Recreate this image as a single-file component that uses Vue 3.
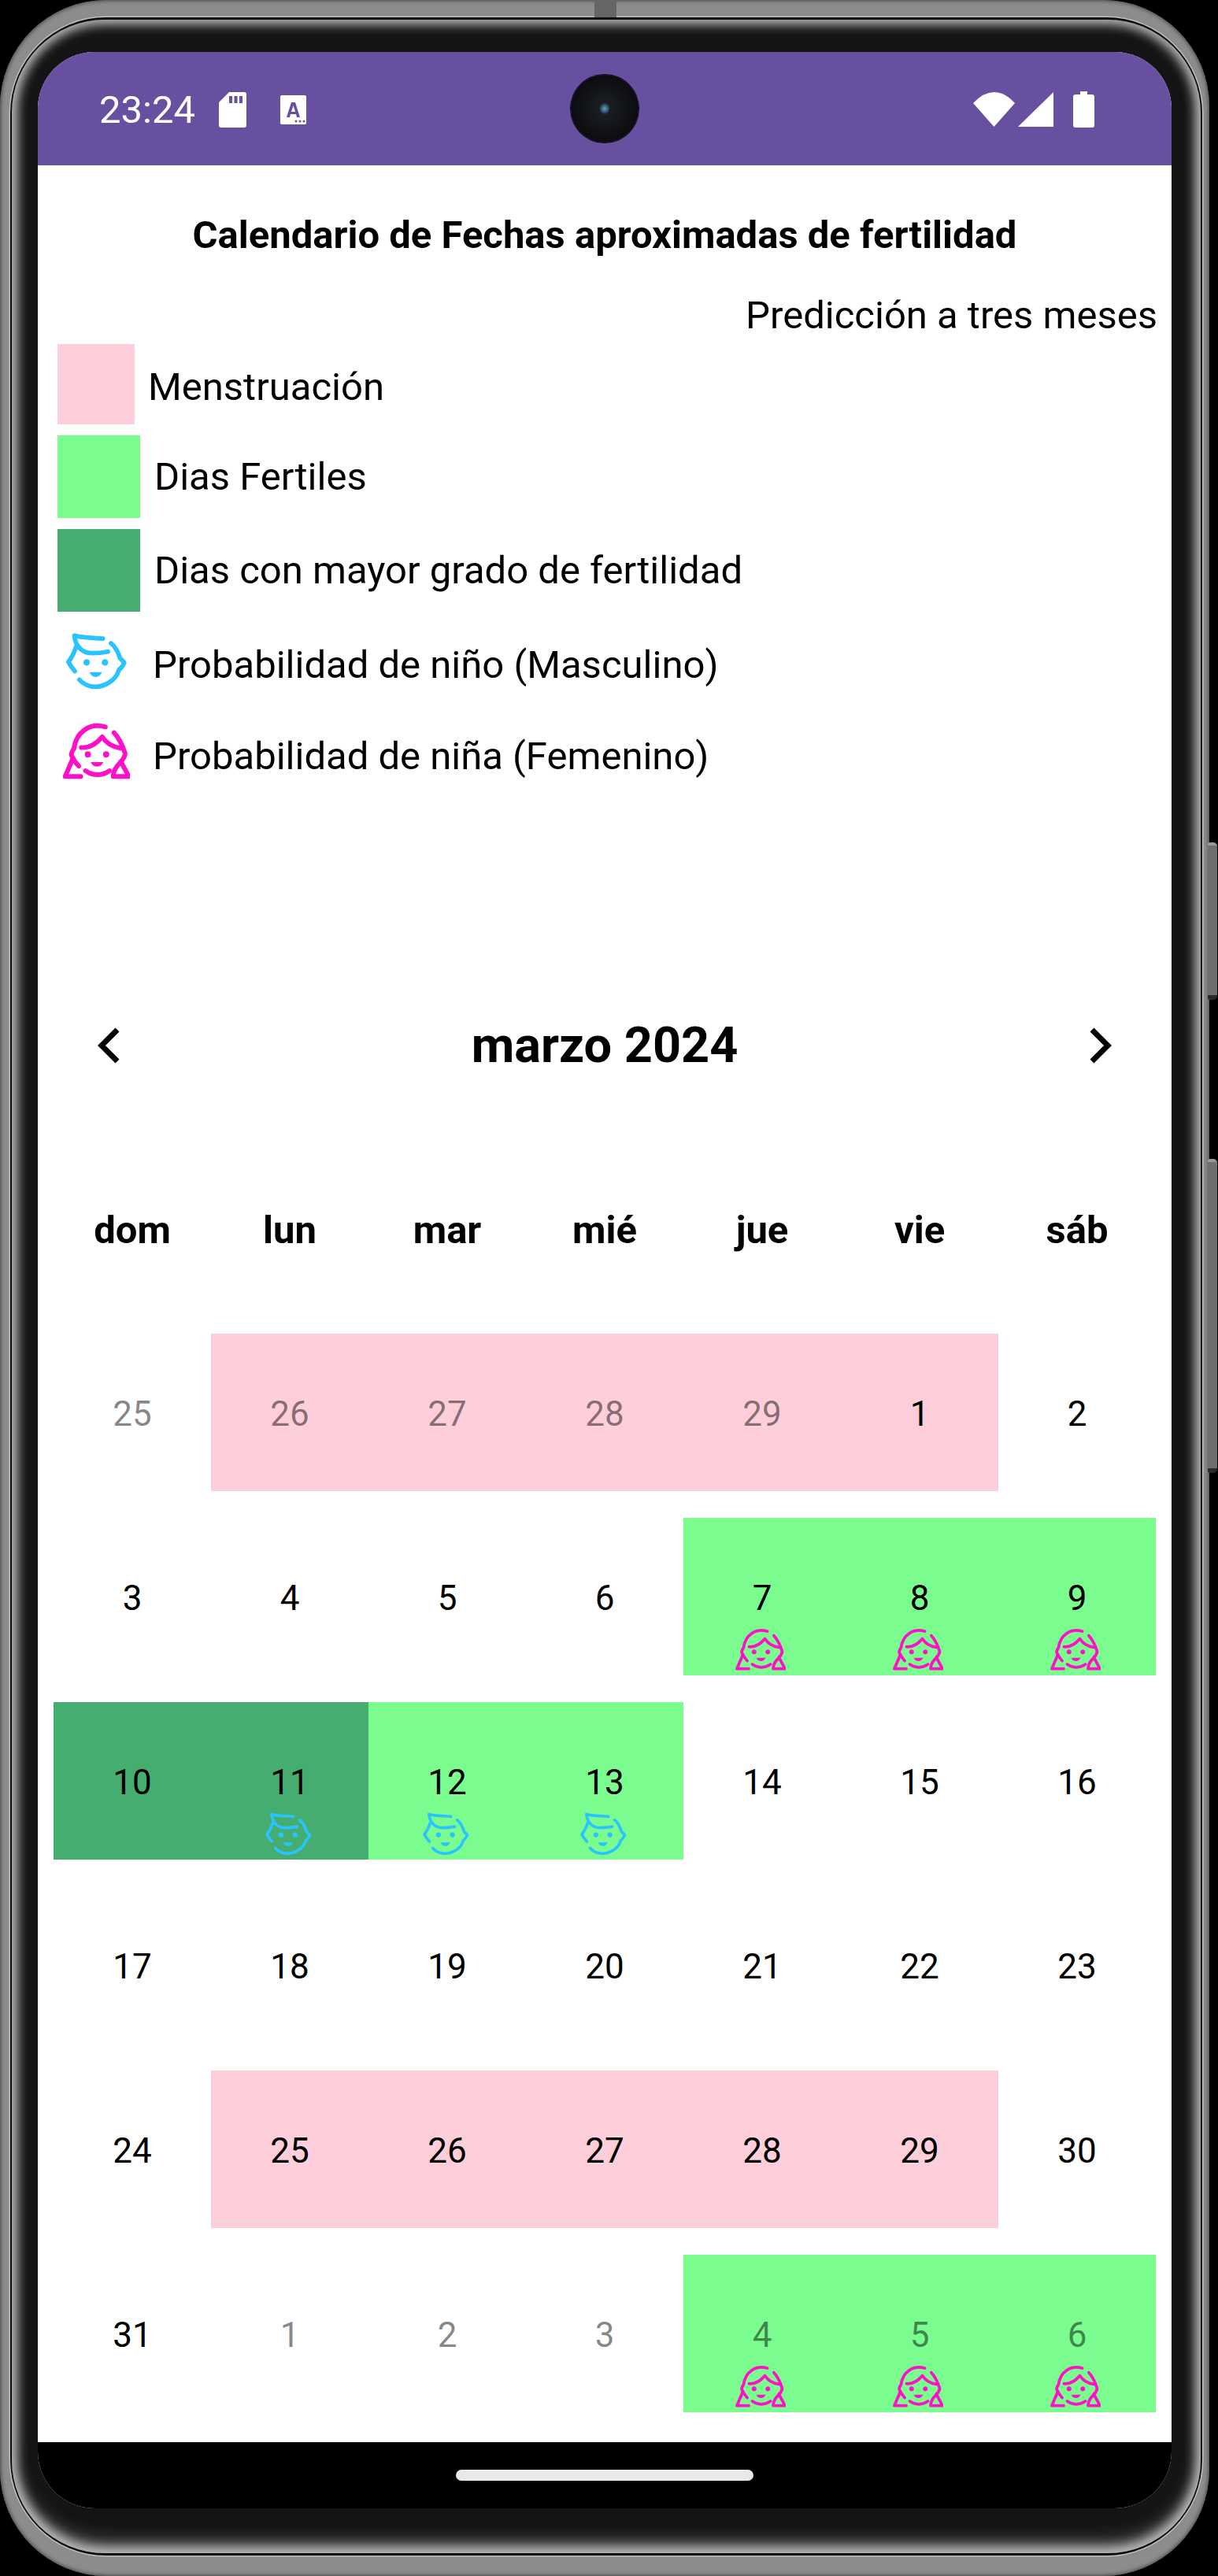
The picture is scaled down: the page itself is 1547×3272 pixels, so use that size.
<script setup>
const weekdays = ['dom', 'lun', 'mar', 'mié', 'jue', 'vie', 'sáb']

// kind: '' | pink | green | deep, icon: '' | boy | girl, out: day from another month
const d = (n, kind = '', icon = '', out = false) => ({ n, kind, icon, out })
const days = [
  d(25, '', '', true), d(26, 'pink', '', true), d(27, 'pink', '', true), d(28, 'pink', '', true), d(29, 'pink', '', true), d(1, 'pink'), d(2),
  d(3), d(4), d(5), d(6), d(7, 'green', 'girl'), d(8, 'green', 'girl'), d(9, 'green', 'girl'),
  d(10, 'deep'), d(11, 'deep', 'boy'), d(12, 'green', 'boy'), d(13, 'green', 'boy'), d(14), d(15), d(16),
  d(17), d(18), d(19), d(20), d(21), d(22), d(23),
  d(24), d(25, 'pink'), d(26, 'pink'), d(27, 'pink'), d(28, 'pink'), d(29, 'pink'), d(30),
  d(31), d(1, '', '', true), d(2, '', '', true), d(3, '', '', true), d(4, 'green', 'girl', true), d(5, 'green', 'girl', true), d(6, 'green', 'girl', true)
]
</script>

<template>
  <div class="page">
    <div class="frame">
      <div class="top-key"></div>
      <div class="groove">
        <div class="bezel">
          <div class="screen">
            <div class="status">
              <span class="time">23:24</span>
              <svg class="sd" viewBox="0 0 35 45">
                <path fill="#fff" fill-rule="evenodd" d="M13 0H32a3 3 0 0 1 3 3V42a3 3 0 0 1-3 3H3a3 3 0 0 1-3-3V13ZM13 5v9h4V5ZM19.500 5v9h4V5ZM26 5v9h4V5Z" />
              </svg>
              <svg class="keyb" viewBox="0 0 33 37">
                <path fill="#fff" d="M2 0H31a2 2 0 0 1 2 2V35a2 2 0 0 1-2 2H2a2 2 0 0 1-2-2V2a2 2 0 0 1 2-2Z" />
                <path fill="#67509f" fill-rule="evenodd" d="M14 9h5l6 19h-4l-1-4h-7l-1 4H8ZM16.500 13l-2.500 8h5Z" />
                <circle cx="20" cy="33" r="1.500" fill="#67509f" /><circle cx="25" cy="33" r="1.500" fill="#67509f" /><circle cx="30" cy="33" r="1.500" fill="#67509f" />
              </svg>
              <div class="camera"><span class="lens"></span></div>
              <svg class="wifi" viewBox="0 0 53 44"><path fill="#fff" d="M0 14Q26.500-14 53 14L26.500 44Z" /></svg>
              <svg class="signal" viewBox="0 0 45 44"><path fill="#fff" d="M45 0V44H0Z" /></svg>
              <svg class="battery" viewBox="0 0 27 46"><path fill="#fff" d="M9 0H18V4H24a3 3 0 0 1 3 3V43a3 3 0 0 1-3 3H3a3 3 0 0 1-3-3V7a3 3 0 0 1 3-3H9Z" /></svg>
            </div>

            <div class="content">
              <h1 class="title">Calendario de Fechas aproximadas de fertilidad</h1>
              <p class="predict">Predicción a tres meses</p>

              <div class="legend">
                <div class="row r-pink"><span class="swatch pink-box"></span><span class="low">Menstruación</span></div>
                <div class="row r-green"><span class="swatch green-box"></span><span>Dias Fertiles</span></div>
                <div class="row r-deep"><span class="swatch deep-box"></span><span>Dias con mayor grado de fertilidad</span></div>
                <div class="row r-boy">
                  <svg class="boy big" viewBox="70 70 245 225"><use href="#boy-face" /></svg>
                  <span>Probabilidad de niño (Masculino)</span>
                </div>
                <div class="row r-girl">
                  <svg class="girl big" viewBox="60 412 256 220"><use href="#girl-face" /></svg>
                  <span>Probabilidad de niña (Femenino)</span>
                </div>
              </div>

              <div class="month">
                <svg class="chev" viewBox="0 0 28 46"><path d="M25 3 5 23l20 20" /></svg>
                <span>marzo 2024</span>
                <svg class="chev" viewBox="0 0 28 46"><path d="M3 3l20 20L3 43" /></svg>
              </div>

              <div class="weekdays">
                <span v-for="w in weekdays" :key="w">{{ w }}</span>
              </div>

              <div class="grid">
                <div v-for="(day, i) in days" :key="i" class="cell" :class="[day.kind, { out: day.out }]">
                  <span class="num">{{ day.n }}</span>
                  <svg v-if="day.icon === 'boy'" class="boy small" viewBox="70 70 245 225"><use href="#boy-face" /></svg>
                  <svg v-if="day.icon === 'girl'" class="girl small" viewBox="60 412 256 220"><use href="#girl-face" /></svg>
                </div>
              </div>
            </div>

            <div class="nav"><span class="home"></span></div>
          </div>
        </div>
      </div>
    </div>
    <div class="keys">
      <span class="key k1"></span>
      <span class="key k2"></span>
    </div>

    <svg class="defs" width="0" height="0">
      <defs>
        <g id="boy-face" fill="none" stroke-linecap="round" stroke-linejoin="round">
          <path d="M220 92C180 88 140 90 106 80C110 120 135 150 175 150C200 150 220 148 240 144" />
          <path d="M114 122C106 145 98 165 82 185C90 200 98 210 108 222" />
          <path d="M252 110C272 125 282 150 288 170C296 178 302 182 305 188C298 205 290 212 284 216C272 260 225 284 190 284C165 284 140 272 126 256" />
          <circle cx="155" cy="187" r="13" fill="currentColor" stroke="none" />
          <circle cx="228" cy="187" r="13" fill="currentColor" stroke="none" />
          <path d="M166 226H216C210 240 202 245 191 245C180 245 172 240 166 226Z" fill="currentColor" stroke="none" />
        </g>
        <g id="girl-face" fill="none" stroke-linecap="round" stroke-linejoin="round">
          <path d="M222 428C160 410 110 450 102 510C96 520 92 530 92 535C96 545 108 565 120 578" />
          <path d="M130 507C165 510 190 490 210 466C225 490 250 505 282 510" />
          <path d="M255 450C275 470 288 500 298 530C296 545 288 555 280 562" />
          <path d="M98 548L68 618H128" />
          <path d="M282 562L312 618H252C252 600 262 580 282 562Z" />
          <path d="M146 596C175 616 210 616 238 596" />
          <circle cx="155" cy="533" r="12" fill="currentColor" stroke="none" />
          <circle cx="225" cy="533" r="12" fill="currentColor" stroke="none" />
          <path d="M166 563H214C208 576 200 580 190 580C180 580 172 576 166 563Z" fill="currentColor" stroke="none" />
        </g>
      </defs>
    </svg>
  </div>
</template>

<style scoped>
.page {
  position: relative;
  width: 1547px;
  height: 3272px;
  background: #000;
  overflow: hidden;
  font-family: Roboto, "Liberation Sans", sans-serif;
  color: #000;
}
.frame {
  position: relative;
  box-sizing: border-box;
  width: 1536px;
  height: 3272px;
  padding: 22px 9px 26px 13px;
  border-radius: 135px;
  background: #8c8c8c;
  box-shadow: inset 0 0 5px 1px #444;
}
.top-key {
  position: absolute;
  top: 0;
  left: 755px;
  width: 28px;
  height: 22px;
  background: #666;
}
.groove {
  height: 100%;
  box-sizing: border-box;
  padding: 3px 2px;
  border-radius: 122px;
  background: #0c0c0c;
  box-shadow: 0 0 0 1.500px #c0c0c0;
}
.bezel {
  height: 100%;
  box-sizing: border-box;
  padding: 41px 37px 57px 33px;
  border-radius: 118px;
  background: #141414;
  box-shadow: inset 0 0 14px 6px #bcbcbc, inset 0 -14px 26px -4px #8a8a8a;
}
.screen {
  height: 100%;
  width: 1440px;
  display: flex;
  flex-direction: column;
  border-radius: 72px;
  overflow: hidden;
  background: #fff;
}
.status {
  position: relative;
  flex: none;
  height: 144px;
  display: flex;
  align-items: center;
  background: #67509f;
  padding-left: 78px;
}
.time {
  color: #fff;
  font-size: 49px;
  width: 152px;
  margin-top: 2px;
}
.sd {
  width: 35px;
  height: 45px;
  margin-top: 2px;
}
.keyb {
  width: 33px;
  height: 37px;
  margin: 2px 0 0 43px;
}
.camera {
  position: absolute;
  left: 677px;
  top: 29px;
  width: 86px;
  height: 86px;
  border-radius: 50%;
  background: radial-gradient(circle, #1c2226 0, #14161a 35%, #0b0b0d 75%);
  display: flex;
  align-items: center;
  justify-content: center;
  box-shadow: 0 0 0 1px #0a0720;
}
.lens {
  width: 12px;
  height: 14px;
  border-radius: 50%;
  background: radial-gradient(circle, #6fa4a8 0, #2a3f60 60%, #14161a 100%);
}
.wifi {
  width: 53px;
  height: 44px;
  margin: 2px 0 0 auto;
}
.signal {
  width: 45px;
  height: 44px;
  margin: 2px 0 0 4px;
}
.battery {
  width: 27px;
  height: 46px;
  margin: 2px 98px 0 25px;
}
.content {
  flex: 1;
  min-height: 0;
}
.title {
  margin: 65px 0 0;
  font-size: 49px;
  line-height: 48px;
  font-weight: 700;
  text-align: center;
}
.predict {
  margin: 54px 18px 0 0;
  font-size: 49px;
  line-height: 48px;
  text-align: right;
}
.legend {
  margin-top: 12px;
  font-size: 49px;
}
.row {
  display: flex;
  align-items: center;
  padding-left: 25px;
}
.low {
  margin-top: 6px;
}
.swatch {
  display: block;
  width: 105px;
  height: 105px;
  margin-right: 18px;
}
.pink-box {
  width: 98px;
  height: 102px;
  margin-right: 17px;
  background: #ffcedb;
}
.green-box {
  background: #7afc8f;
}
.deep-box {
  background: #46ad70;
}
.r-green {
  margin-top: 14px;
}
.r-deep {
  margin-top: 14px;
}
.r-boy {
  margin-top: 31px;
  padding-left: 35px;
}
.r-girl {
  margin-top: 44px;
  padding-left: 32px;
}
.boy {
  color: #29c4ff;
  stroke: #29c4ff;
}
.girl {
  color: #ff10c8;
  stroke: #ff10c8;
}
.big {
  stroke-width: 18;
}
.big.boy {
  width: 78px;
  height: 72px;
  margin: -4px 33px 4px 0;
}
.big.girl {
  width: 85px;
  height: 73px;
  margin: -6px 29px 6px 0;
}
.month {
  margin-top: 296px;
  padding: 0 76px;
  display: flex;
  align-items: center;
  justify-content: space-between;
  font-size: 63px;
  line-height: 70px;
  font-weight: 700;
}
.chev {
  width: 28px;
  height: 46px;
  fill: none;
  stroke: #000;
  stroke-width: 7;
}
.weekdays {
  margin: 172px 0 0 20px;
  width: 1400px;
  display: grid;
  grid-template-columns: repeat(7, 200px);
  text-align: center;
  font-size: 49px;
  line-height: 56px;
  font-weight: 700;
}
.grid {
  margin: 103px 0 0 20px;
  width: 1400px;
  display: grid;
  grid-template-columns: repeat(7, 200px);
  grid-auto-rows: 200px;
  row-gap: 34px;
}
.cell {
  position: relative;
  display: flex;
  align-items: center;
  justify-content: center;
  font-size: 44px;
}
.num {
  margin-top: 4px;
}
.pink {
  background: #ffcedb;
}
.green {
  background: #7afc8f;
}
.deep {
  background: #46ad70;
}
.out span {
  color: rgba(0, 0, 0, 0.47);
}
.small {
  position: absolute;
  left: calc(50% - 2px);
  bottom: 5px;
  transform: translateX(-50%);
  stroke-width: 15;
}
.small.boy {
  width: 60px;
  height: 55px;
}
.small.girl {
  width: 64px;
  height: 55px;
}
.nav {
  flex: none;
  height: 84px;
  background: #000;
  display: flex;
  justify-content: center;
  padding-top: 35px;
  box-sizing: border-box;
}
.home {
  width: 378px;
  height: 14px;
  border-radius: 7px;
  background: #e8e8e8;
}
.keys {
  position: absolute;
  top: 0;
  left: 1534px;
  width: 12px;
}
.key {
  position: absolute;
  left: 0;
  width: 12px;
  border-radius: 3px 5px 5px 3px;
  background: #6f6f6f;
  border-top: 4px solid #999;
  border-bottom: 6px solid #2a2a2a;
  box-sizing: border-box;
}
.k1 {
  top: 1070px;
  height: 200px;
}
.k2 {
  top: 1472px;
  height: 399px;
}
.defs {
  position: absolute;
}
</style>
